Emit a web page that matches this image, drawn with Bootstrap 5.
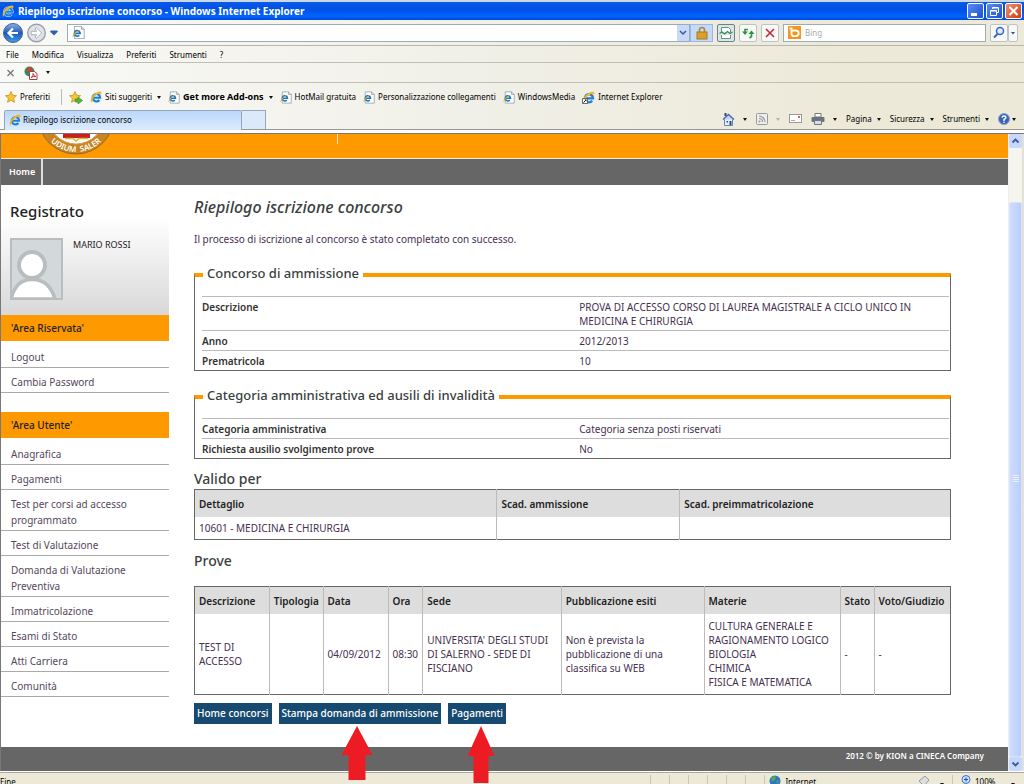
<!doctype html>
<html lang="it">
<head>
<meta charset="utf-8">
<meta name="viewport" content="width=device-width, initial-scale=1">
<title>Riepilogo iscrizione concorso</title>
<link href="https://cdn.jsdelivr.net/npm/bootstrap@5.3.0/dist/css/bootstrap.min.css" rel="stylesheet">
<style>
:root{--orange:#ff9900;--grey:#666;--ink:#46304f;--label:#333}
body{font-family:"Noto Sans","Open Sans",sans-serif;font-size:10px;line-height:14px;color:var(--ink);height:100vh;overflow:hidden;background:#fff}
button{font:inherit;color:inherit;border:0;background:none;padding:0}
svg{display:block;flex:none}
a{color:inherit;text-decoration:none}

/* browser chrome */
.chrome{font-size:8px;line-height:12px;color:#000;background:linear-gradient(90deg,#f9f9f7 0,#f1f0e8 45%,#ece9d8 85%)}
.titlebar{height:20px;padding:0 2px;border-top:2px solid #ccd7e6;background:linear-gradient(#0a5be8,#0050e4 40%,#0064ff 80%,#0046d8);color:#fff;font-size:10px;font-weight:700}
.winbtns{gap:2px}
.winbtn{width:17px;height:16px;border:1px solid #fff;border-radius:2px;background:linear-gradient(135deg,#5b8cf0,#1c4fd2)}
.winbtn-close{background:linear-gradient(135deg,#f09070,#d03c10)}
.navrow{height:26px;padding:0 6px 0 3px;border-bottom:1px solid #b8b7ae}
.box{border:1px solid #9cabba;background:#fff;height:18px}
.address{margin-left:9px}
.searchbox{width:20%}
.box input{border:0;outline:0;padding:0 4px;min-width:0;width:100%;height:14px;font-size:8px;background:transparent}
.box input::placeholder{color:#aaa;opacity:1}
.history{background:#c9d9fb}
.lockbox{width:23px;height:18px;background:#c6d9f8;border:1px solid #9db7e0}
.toolbtn{width:18px;height:18px;border:1px solid #bcc3c8;border-radius:2px;background:#f8f8f6}
.toolbtn-on{border-color:#6d7f8c;background:#dde5e8}
.toolbtn-slim{width:10px}
.menurow{height:17px;padding:2px 0 0 6px;gap:13px;border-bottom:1px solid #c0bfb6}
.addonrow{height:20px;padding-left:6px;gap:9px;border-bottom:1px solid #c0bfb6}
.favrow{height:26px;padding:2px 5px 0;gap:7px}
.linkbtn{gap:3px;white-space:nowrap}
.linkbtn-strong{font-size:9px;font-weight:700}
.caret{border:2px solid transparent;border-top:3px solid #111;border-bottom:0;margin-left:2px}
.tabrow{height:21px;padding:0 8px 0 4px;border-bottom:1px solid #9a9a92}
.tab{width:238px;height:20px;margin-top:1px;padding-left:4px;gap:2px;border:1px solid #93a6bd;border-bottom:0;border-radius:2px 2px 0 0;background:linear-gradient(#bcd7fb,#dcebfd)}
.tabnew{width:24px;height:19px;margin-top:1px;border:1px solid #93a6bd;border-left:0;border-bottom:0;background:#dce9fb}
.cmds{gap:9px}
.chromeend{height:4px;background:#fff;border-bottom:1px solid #777}

/* page */
.pagearea{border-left:1px solid #777}
.banner{height:25px;background:var(--orange);border-bottom:1px solid #fff0d8;overflow:hidden;padding-left:35px}
.banner-rule{width:1px;height:10px;background:#ffe6c4;margin-left:221px}
.topnav{background:var(--grey);height:26px;color:#fff;font-size:9px;font-weight:600}
.topnav a{width:42px;padding-left:8px;border-right:2px solid #ddd;line-height:26px}
.side{width:168px;flex:none}
.usercard{height:130px;padding:17px 10px 0 9px;background:linear-gradient(#fff 25%,#d8d8d8)}
.usercard h2{font-size:15px;line-height:18px;font-weight:500;color:#222;margin:0 0 18px}
.username{font-size:9px;color:#222;margin-left:10px}
.sidehead{height:26px;line-height:26px;padding-left:10px;margin:0 0 2px;background:var(--orange);font-size:10px;font-weight:500;color:#222}
.sidelist{line-height:16px;color:#55485c}
.sidelist li{border-bottom:1px solid #aaa;padding:6px 20px 2px 10px}
.sidelist + .sidehead{margin-top:19px}
.main{padding:13px 57px 23px 25px}
.main h1{font-size:16px;line-height:18px;font-style:italic;font-weight:500;color:#3b3f3f;margin:0 0 16px}
.main h2{font-size:14px;line-height:20px;font-weight:500;color:#3b3f3f;margin:0}
.notice{margin-bottom:19px}
fieldset{border:1px solid var(--grey);border-top:4px solid var(--orange);margin:0 0 16px;padding:11px 1px 0 7px}
legend{float:none;width:auto;margin:0 0 0 1px;padding:0 4px 4px;font-size:13px;line-height:16px;font-weight:500;color:#3b3f3f}
.pairs{width:100%;table-layout:fixed;font-size:10px;line-height:14px}
.pairs th,.pairs td{border-top:1px solid #bbb;padding:3px 0 2px;vertical-align:top}
.pairs th{width:50.5%;font-weight:600;color:var(--label)}
.pairs td{padding-right:30px}
.main .lead-in{margin-top:10px}
.main .spaced{margin:11px 0 15px}
.grid{width:100%;table-layout:fixed;border:1px solid var(--grey);margin:0;line-height:14px;color:var(--ink)}
.grid th{background:#ddd;color:#222;font-weight:600;white-space:nowrap;padding:7px 0 6px 4px;line-height:14px;border-right:1px solid #bbb}
.grid td{padding:4px 2px 4px 4px;border-right:1px solid #bbb;vertical-align:middle;height:22px}
.grid th:last-child,.grid td:last-child{border-right:0}
.grid-tests td{height:80px}
.actions{gap:7px;margin-top:8px}
.act{height:21px;padding:0 3px;background:#174a70;color:#fff;font-weight:500;line-height:21px}
.pointer{top:23px;left:48%;transform:translateX(-50%);z-index:5}
.pointer-pay{left:57%}
.pagefoot{height:24px;background:var(--grey);color:#fff;font-size:8px;font-weight:600;padding:2px 24px 0 0}
.scroller{width:16px;flex:none;background:#f5f4ee;border-right:2px solid #e4e2d8;border-left:1px solid #eee}
.scrollbtn{width:13px;height:14px;border-radius:2px;background:#c8d8fc}
.track{height:8.5%}
.thumb{background:linear-gradient(90deg,#cfdcfd,#b9cdfb);border-radius:2px;border:1px solid #d8e2fd}
.statusbar{height:24px;margin-top:1px;padding-top:2px;border-top:1px solid #aaa89a;background:#ece9d8;color:#000;font-size:8px;line-height:14px}
.cell{width:19px;height:16px;border-left:1px solid #c9c6b4}
.cell-zone{width:15%}
.cell-zoom{width:72px}
</style>
</head>
<body class="d-flex flex-column">

<svg width="0" height="0" class="position-absolute" aria-hidden="true">
  <defs>
    <symbol id="ie" viewBox="0 0 16 16">
      <path d="M4 9h9.500A5 5 0 1 0 12.500 12" fill="none" stroke="#d8ecff" stroke-width="4"/>
      <path d="M4 9h9.500A5 5 0 1 0 12.500 12" fill="none" stroke="#1f80dc" stroke-width="2.800"/>
      <path d="M2.600 15.500C-1.500 13 3 5.500 8.500 2.300c3.500-2 7-2.200 6.700.8-.1 1-.6 2-1.200 2.800.6-2.400-.6-3.200-3.400-1.800C6.500 6 2.500 11 2.600 15.500z" fill="#f2b51d"/>
    </symbol>
    <symbol id="iepage" viewBox="0 0 16 16">
      <path d="M3 .5h8.500L15 4v11.500H3z" fill="#fff" stroke="#8d99a6"/><path d="M11.500.5V4H15" fill="#dde" stroke="#8d99a6"/>
      <path d="M3.500 9h6.500A3.500 3.500 0 1 0 9 11.500" fill="none" stroke="#1b72c4" stroke-width="2"/>
      <path d="M1 14C-.5 10.500 6 4.500 11 4.500 7 6 3 9.500 1 14z" fill="#d9b22c"/>
    </symbol>
    <symbol id="star" viewBox="0 0 16 16"><path d="M8 .8l2.200 4.900 5.200.5-3.900 3.600 1.100 5.300L8 12.400l-4.600 2.700 1.100-5.300L.6 6.200l5.200-.5z" fill="#fbc531" stroke="#c98a14"/></symbol>
  </defs>
</svg>

<header class="chrome flex-shrink-0">
  <div class="titlebar d-flex align-items-center">
    <svg width="12" height="12" class="me-1"><use href="#ie"/></svg>
    <span class="me-auto text-nowrap">Riepilogo iscrizione concorso - Windows Internet Explorer</span>
    <div class="winbtns d-flex">
      <button class="winbtn" aria-label="Riduci a icona"><svg width="15" height="14"><rect x="3" y="9" width="6" height="3" fill="#fff"/></svg></button>
      <button class="winbtn" aria-label="Ripristina"><svg width="15" height="14"><path d="M5.500 5V3.500h6v5H10M3.500 6.500h6v5h-6zM3.500 7h6M5.500 4h6" fill="none" stroke="#fff"/></svg></button>
      <button class="winbtn winbtn-close" aria-label="Chiudi"><svg width="15" height="14"><path d="M3.500 3l8 8m0-8l-8 8" stroke="#fff" stroke-width="2"/></svg></button>
    </div>
  </div>

  <div class="navrow d-flex align-items-center">
    <button aria-label="Indietro"><svg width="20" height="22" viewBox="0 0 20 22"><defs><linearGradient id="bk" x2="0" y2="1"><stop stop-color="#8cb2ea"/><stop offset=".5" stop-color="#1f59b8"/><stop offset="1" stop-color="#3fa0ee"/></linearGradient></defs><circle cx="10" cy="11" r="9.500" fill="url(#bk)" stroke="#4a6285"/><path d="M15 11H6m4-4.500L5.500 11l4.500 4.500" fill="none" stroke="#fff" stroke-width="2.200"/></svg></button>
    <button class="ms-1" aria-label="Avanti"><svg width="19" height="22" viewBox="0 0 19 22"><circle cx="9.500" cy="11" r="8.800" fill="#dfe3ea" stroke="#98a0aa" stroke-width="1.400"/><path d="M4.200 9.300h5.500L8 7l1.400-1.300 5.300 5.300-5.300 5.300L8 15l1.700-2.300H4.200z" fill="#fff" stroke="#9aa1aa" stroke-width=".8"/></svg></button>
    <button class="ms-1" aria-label="Pagine recenti"><svg width="8" height="6"><path d="M0 1.500L1 .5h6l1 1-4 4z" fill="#2c62a8"/></svg></button>
    <div class="box address d-flex align-items-center flex-fill">
      <svg width="13" height="13" class="ms-1"><use href="#iepage"/></svg>
      <input type="text" aria-label="Indirizzo">
      <button aria-label="Cronologia" class="history h-100"><svg width="12" height="16"><path d="M3 6l3 3 3-3" fill="none" stroke="#3c5a94" stroke-width="1.500"/></svg></button>
    </div>
    <button class="lockbox d-flex justify-content-center align-items-center" aria-label="Protezione"><svg width="12" height="14"><path d="M3.500 7V4a2.500 2.500 0 0 1 5 0v3" fill="none" stroke="#a98a3a" stroke-width="1.600"/><rect x="1" y="6" width="10" height="7" fill="#d9a02c" stroke="#a97818"/></svg></button>
    <div class="d-flex gap-1 mx-1">
      <button class="toolbtn toolbtn-on" aria-label="Visualizzazione compatibilità"><svg width="16" height="16"><path d="M3.500 7V2.500h7l2 2V7M3.500 10v3.500h9V10" fill="#fff" stroke="#5a9a72"/><path d="M1.500 8.500l2.500-1.500 2.500 2 3-2.500 2.500 2 2.500-1.500" fill="none" stroke="#2f8a52" stroke-width="1.300"/></svg></button>
      <button class="toolbtn" aria-label="Aggiorna"><svg width="16" height="16"><path d="M8 4.500H5v3" fill="none" stroke="#2c9440" stroke-width="1.600"/><path d="M2 6.500h6L5 10z" fill="#2c9440"/><path d="M11.500 8v3.500l-2 1.500" fill="none" stroke="#2c9440" stroke-width="1.600"/><path d="M8.500 9h6l-3-3.500z" fill="#2c9440"/></svg></button>
      <button class="toolbtn" aria-label="Interrompi"><svg width="16" height="16"><path d="M4 4l8 8m0-8l-8 8" stroke="#c3283a" stroke-width="1.600"/></svg></button>
    </div>
    <div class="box searchbox d-flex align-items-center">
      <svg width="13" height="13" class="ms-1"><rect width="13" height="13" fill="#f7941d"/><path d="M1.500 2.500h2v3M3.500 4.500h4a3 2.600 0 0 1 0 5.600H5.500a2 2 0 0 1-2-2z" fill="none" stroke="#fff" stroke-width="1.800"/></svg>
      <input type="search" placeholder="Bing" aria-label="Cerca con Bing">
    </div>
    <div class="d-flex ms-1">
      <button class="toolbtn" aria-label="Cerca"><svg width="16" height="16"><circle cx="9" cy="6" r="3.500" fill="#dfeafc" stroke="#3566c8" stroke-width="1.500"/><path d="M6.500 9L3 12.500" stroke="#3566c8" stroke-width="2"/></svg></button>
      <button class="toolbtn toolbtn-slim" aria-label="Opzioni di ricerca"><svg width="8" height="16"><path d="M2 7h4L4 9.500z" fill="#2a4f9a"/></svg></button>
    </div>
  </div>

  <nav class="menurow d-flex align-items-center" aria-label="Menu">
    <button>File</button><button>Modifica</button><button>Visualizza</button><button>Preferiti</button><button>Strumenti</button><button>?</button>
  </nav>

  <div class="addonrow d-flex align-items-center">
    <button aria-label="Chiudi barra"><svg width="9" height="8"><path d="M1.500 1l6 6m0-6l-6 6" stroke="#777" stroke-width="1.300"/></svg></button>
    <button class="d-flex align-items-center gap-2" aria-label="Converti in PDF"><svg width="14" height="14"><circle cx="5.500" cy="5.500" r="5" fill="#2f8f5a"/><path d="M2 2.500q4-3 7 0L7 6 3 5z" fill="#c4473a"/><path d="M5.500 5.500h5l2.500 2v6H5.500z" fill="#fff" stroke="#b04040"/><path d="M7 11.500q3-1.500 2-4 1 3 3 3-3-.5-5 1z" fill="none" stroke="#d03030"/></svg><span class="caret ms-0"></span></button>
  </div>

  <div class="favrow d-flex align-items-center">
    <button class="linkbtn d-flex align-items-center"><svg width="12" height="12"><use href="#star"/></svg>Preferiti</button>
    <span class="vr my-1 ms-1"></span>
    <button aria-label="Aggiungi ai preferiti"><svg width="14" height="13" viewBox="0 0 14 13"><use href="#star" width="12" height="12"/><path d="M6 8h3V6l4.500 3.500L9 13v-2H6z" fill="#4fb83c" stroke="#2c8428" stroke-width=".6"/></svg></button>
    <button class="linkbtn d-flex align-items-center"><svg width="12" height="12"><use href="#ie"/></svg>Siti suggeriti<span class="caret"></span></button>
    <button class="linkbtn linkbtn-strong d-flex align-items-center"><svg width="12" height="13"><use href="#iepage"/></svg>Get more Add-ons<span class="caret"></span></button>
    <a href="#" class="linkbtn d-flex align-items-center"><svg width="12" height="13"><use href="#iepage"/></svg>HotMail gratuita</a>
    <a href="#" class="linkbtn d-flex align-items-center"><svg width="12" height="13"><use href="#iepage"/></svg>Personalizzazione collegamenti</a>
    <a href="#" class="linkbtn d-flex align-items-center"><svg width="12" height="13"><use href="#iepage"/></svg>WindowsMedia</a>
    <a href="#" class="linkbtn d-flex align-items-center"><svg width="13" height="13" viewBox="0 0 13 13"><use href="#ie" width="13" height="13"/><path d="M.5 7.500h5v5h-5z" fill="#fff" stroke="#333" stroke-width=".7"/><path d="M1.500 11.500L4 9" stroke="#111"/><path d="M2.500 8.500h2v2z" fill="#111"/></svg>Internet Explorer</a>
  </div>

  <div class="tabrow d-flex align-items-center">
    <button class="tab d-flex align-items-center"><svg width="12" height="12"><use href="#ie"/></svg>Riepilogo iscrizione concorso</button>
    <button class="tabnew" aria-label="Nuova scheda"></button>
    <div class="cmds d-flex align-items-center ms-auto">
      <button class="d-flex align-items-center gap-2" aria-label="Pagina iniziale"><svg width="13" height="13"><path d="M2.500 5.500h8v7h-8z" fill="#e8eefc" stroke="#6c86b8"/><path d="M1 6.500L6.500 1.500 12 6.500" fill="#c5d3ee" stroke="#4d6aa6" stroke-width="1.300"/><path d="M2.500 0h2v3h-2z" fill="#2b4a86"/><path d="M4.500 8h1.500v1.500H4.500zM7.500 8h2v4h-2z" fill="#2b4a86"/></svg><span class="caret ms-0"></span></button>
      <button class="d-flex align-items-center gap-2" aria-label="Feed"><svg width="12" height="12"><rect x=".5" y=".5" width="11" height="11" rx="1" fill="#eee" stroke="#999"/><path d="M3 5.500a3.500 3.500 0 0 1 3.500 3.500M3 3a6 6 0 0 1 6 6" fill="none" stroke="#999" stroke-width="1.200"/><circle cx="3.500" cy="8.500" r="1" fill="#999"/></svg><span class="caret ms-0 opacity-25"></span></button>
      <button aria-label="Posta"><svg width="13" height="10"><rect x=".5" y=".5" width="12" height="8" fill="#fff" stroke="#999"/><path d="M2 6.500h4" stroke="#aaa"/><rect x="9" y="2" width="2" height="2" fill="#c66"/></svg></button>
      <button class="d-flex align-items-center gap-2" aria-label="Stampa"><svg width="14" height="12"><path d="M4 .5h6V4H4z" fill="#fff" stroke="#777"/><rect x=".5" y="4" width="13" height="5" rx="1" fill="#6d737c"/><path d="M3.500 7.500h7v4h-7z" fill="#cfdcf2" stroke="#777"/></svg><span class="caret ms-0"></span></button>
      <button class="linkbtn d-flex align-items-center">Pagina<span class="caret"></span></button>
      <button class="linkbtn d-flex align-items-center">Sicurezza<span class="caret"></span></button>
      <button class="linkbtn d-flex align-items-center">Strumenti<span class="caret"></span></button>
      <button class="d-flex align-items-center" aria-label="Guida"><svg width="12" height="12"><circle cx="6" cy="6" r="5.500" fill="#3a63b4" stroke="#8aa0c8"/><path d="M4 4.700Q4.200 3 6 3t2 1.600Q8 5.600 6 6.500V8" fill="none" stroke="#fff" stroke-width="1.400"/><circle cx="6" cy="9.300" r=".8" fill="#fff"/></svg><span class="caret"></span></button>
    </div>
  </div>
  <div class="chromeend"></div>
</header>

<div class="d-flex flex-shrink-0">
  <div class="pagearea flex-fill">
    <div class="banner d-flex">
      <svg width="80" height="24" viewBox="36 134 80 24" role="img" aria-label="Sigillo dell'ateneo">
        <circle cx="76" cy="116" r="38" fill="#c98420" stroke="#8a6a3a"/>
        <circle cx="76" cy="116" r="28" fill="#fff" stroke="#d9a050"/>
        <rect x="63" y="130" width="27" height="8" fill="#c8201c"/>
        <path d="M65 138.500h8l3 2.500 3-2.500h9" fill="none" stroke="#e0b92c" stroke-width="1.500"/>
        <path id="ring" d="M40 116a36 36 0 0 0 72 0" fill="none"/>
        <text font-size="8" font-weight="600" fill="#fff" text-anchor="middle"><textPath href="#ring" startOffset="50%">UDIUM &#160;SALER</textPath></text>
      </svg>
      <span class="banner-rule"></span>
    </div>
    <nav class="topnav d-flex"><a href="#">Home</a></nav>

    <div class="d-flex">
      <aside class="side">
        <div class="usercard">
          <h2>Registrato</h2>
          <div class="d-flex">
            <svg width="53" height="62" viewBox="0 0 53 62" role="img" aria-label="Foto profilo"><rect x="1" y="1" width="51" height="60" fill="#d3d8da"/><circle cx="22" cy="27" r="13" fill="#fff" stroke="#b9bdbf" stroke-width="4"/><path d="M1 61Q6 41 22 41.500 39 41 45 61z" fill="#fff" stroke="#b9bdbf" stroke-width="3.500"/><rect x="1" y="1" width="51" height="60" fill="none" stroke="#b9bdbf" stroke-width="2"/></svg>
            <span class="username text-nowrap">MARIO ROSSI</span>
          </div>
        </div>
        <h3 class="sidehead">'Area Riservata'</h3>
        <ul class="sidelist list-unstyled mb-0">
          <li><a href="#">Logout</a></li>
          <li><a href="#">Cambia Password</a></li>
        </ul>
        <h3 class="sidehead">'Area Utente'</h3>
        <ul class="sidelist list-unstyled mb-0">
          <li><a href="#">Anagrafica</a></li>
          <li><a href="#">Pagamenti</a></li>
          <li><a href="#">Test per corsi ad accesso programmato</a></li>
          <li><a href="#">Test di Valutazione</a></li>
          <li><a href="#">Domanda di Valutazione Preventiva</a></li>
          <li><a href="#">Immatricolazione</a></li>
          <li><a href="#">Esami di Stato</a></li>
          <li><a href="#">Atti Carriera</a></li>
          <li><a href="#">Comunità</a></li>
        </ul>
      </aside>

      <main class="main flex-fill">
        <h1>Riepilogo iscrizione concorso</h1>
        <p class="notice">Il processo di iscrizione al concorso è stato completato con successo.</p>

        <fieldset>
          <legend>Concorso di ammissione</legend>
          <table class="pairs">
            <tr><th scope="row">Descrizione</th><td>PROVA DI ACCESSO CORSO DI LAUREA MAGISTRALE A CICLO UNICO IN MEDICINA E CHIRURGIA</td></tr>
            <tr><th scope="row">Anno</th><td>2012/2013</td></tr>
            <tr><th scope="row">Prematricola</th><td>10</td></tr>
          </table>
        </fieldset>

        <fieldset class="mb-0">
          <legend>Categoria amministrativa ed ausili di invalidità</legend>
          <table class="pairs">
            <tr><th scope="row">Categoria amministrativa</th><td>Categoria senza posti riservati</td></tr>
            <tr><th scope="row">Richiesta ausilio svolgimento prove</th><td>No</td></tr>
          </table>
        </fieldset>

        <h2 class="lead-in">Valido per</h2>
        <table class="grid">
          <colgroup><col style="width:40%"><col style="width:24.2%"><col></colgroup>
          <thead><tr><th>Dettaglio</th><th>Scad. ammissione</th><th>Scad. preimmatricolazione</th></tr></thead>
          <tbody><tr><td>10601 - MEDICINA E CHIRURGIA</td><td></td><td></td></tr></tbody>
        </table>

        <h2 class="spaced">Prove</h2>
        <table class="grid grid-tests">
          <colgroup><col style="width:9.9%"><col style="width:7.1%"><col style="width:8.6%"><col style="width:4.6%"><col style="width:18.3%"><col style="width:18.9%"><col style="width:18%"><col style="width:4.5%"><col></colgroup>
          <thead><tr><th>Descrizione</th><th>Tipologia</th><th>Data</th><th>Ora</th><th>Sede</th><th>Pubblicazione esiti</th><th>Materie</th><th>Stato</th><th>Voto/Giudizio</th></tr></thead>
          <tbody><tr>
            <td>TEST DI<br>ACCESSO</td><td></td><td>04/09/2012</td><td>08:30</td>
            <td>UNIVERSITA' DEGLI STUDI<br>DI SALERNO - SEDE DI<br>FISCIANO</td>
            <td>Non è prevista la<br>pubblicazione di una<br>classifica su WEB</td>
            <td>CULTURA GENERALE E<br>RAGIONAMENTO LOGICO<br>BIOLOGIA<br>CHIMICA<br>FISICA E MATEMATICA</td>
            <td>-</td><td>-</td>
          </tr></tbody>
        </table>

        <div class="actions d-flex">
          <button class="act">Home concorsi</button>
          <div class="position-relative">
            <button class="act">Stampa domanda di ammissione</button>
            <svg class="pointer position-absolute" width="31" height="55" viewBox="0 0 31 55" aria-hidden="true"><path d="M15.500 0L31 29h-7v25H7V29H0z" fill="#ed1c24"/></svg>
          </div>
          <div class="position-relative">
            <button class="act">Pagamenti</button>
            <svg class="pointer pointer-pay position-absolute" width="27" height="58" viewBox="0 0 27 58" aria-hidden="true"><path d="M13.500 0L27 30h-6v27H6V30H0z" fill="#ed1c24"/></svg>
          </div>
        </div>
      </main>
    </div>
    <footer class="pagefoot text-end">2012 © by KION a CINECA Company</footer>
  </div>

  <div class="scroller d-flex flex-column" aria-hidden="true">
    <span class="scrollbtn"><svg width="13" height="14"><path d="M3.500 8.500l3-3 3 3" fill="none" stroke="#3d5a94" stroke-width="1.800"/></svg></span>
    <span class="track"></span>
    <span class="thumb flex-fill d-flex align-items-center justify-content-center"><svg width="6" height="8"><path d="M0 .5h6M0 2.500h6M0 4.500h6M0 6.500h6" stroke="#e8effe"/></svg></span>
    <span class="scrollbtn"><svg width="13" height="14"><path d="M3.500 5.500l3 3 3-3" fill="none" stroke="#3d5a94" stroke-width="1.800"/></svg></span>
  </div>
</div>

<footer class="statusbar d-flex flex-shrink-0">
  <span class="me-auto">Fine</span>
  <span class="cell"></span><span class="cell"></span><span class="cell"></span><span class="cell"></span><span class="cell"></span><span class="cell"></span>
  <span class="cell cell-zone d-flex gap-1 ps-1"><svg width="12" height="12"><circle cx="6" cy="6" r="5.500" fill="#2f74c8"/><path d="M2 3q3-3 5-1L6 5 3 7zM7 6l3-1-1 4z" fill="#4fae4a"/></svg>Internet</span>
  <span class="d-flex align-items-start gap-2"><svg width="12" height="12"><path d="M1 6l6-5 4 4-5 6z" fill="#ddd" stroke="#999"/></svg><span class="caret mt-2"></span></span>
  <span class="cell cell-zoom d-flex align-items-start ms-2 ps-2"><svg width="10" height="12"><circle cx="5" cy="4.500" r="4" fill="#cfe2fb" stroke="#3c6fc0"/><path d="M3 4.500h4M5 2.500v4" stroke="#1c4fa8"/></svg><span class="ms-1">100%</span><span class="caret mt-2 ms-3"></span></span>
</footer>

<script src="https://cdn.jsdelivr.net/npm/bootstrap@5.3.0/dist/js/bootstrap.bundle.min.js"></script>
</body>
</html>
